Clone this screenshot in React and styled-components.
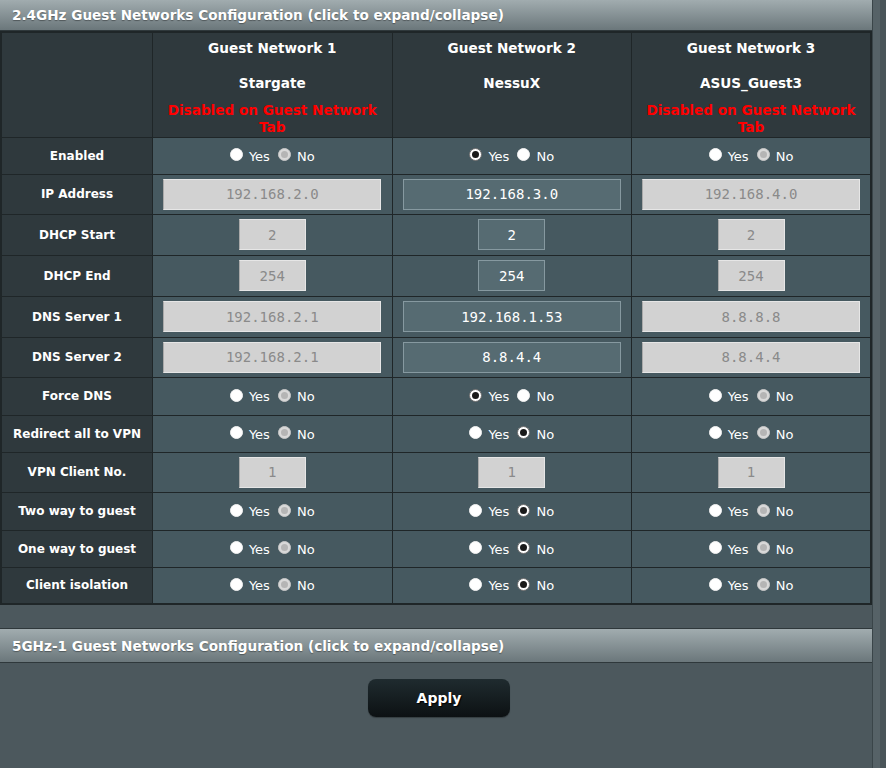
import React from "react";
import styled, { createGlobalStyle } from "styled-components";

const Global = createGlobalStyle`
  html, body { margin: 0; padding: 0; background: #4c585d; }
  body { font-family: "DejaVu Sans", Verdana, sans-serif; color: #fff; }
`;

const Page = styled.div`
  display: flex;
  width: 886px;
  height: 768px;
  overflow: hidden;
`;

const Main = styled.div`
  width: 872px;
  display: flex;
  flex-direction: column;
`;

const SideStrip = styled.div`
  width: 14px;
  border-left: 1px solid #3a4549;
  background: linear-gradient(to right, #566267 0 7px, #4a5559 7px);
`;

const SectionBar = styled.div`
  height: ${(p) => p.$h}px;
  box-sizing: border-box;
  display: flex;
  align-items: center;
  padding-left: 12px;
  background: linear-gradient(to bottom, #a1acaf, #6b777b);
  border-top: ${(p) => (p.$bordered ? "1px solid #2f383b" : "none")};
  border-bottom: 1px solid #2f383b;
  font-size: 13.6px;
  font-weight: bold;
  color: #fff;
  text-shadow: 0 1px 1px rgba(0, 0, 0, 0.35);
  white-space: nowrap;
`;

const Table = styled.table`
  width: 872px;
  table-layout: fixed;
  border-collapse: collapse;
  border: 2px solid #1f2628;
`;

const HeadRow = styled.tr`
  height: 105px;
`;

const Row = styled.tr`
  height: ${(p) => p.$h}px;
`;

const Corner = styled.th`
  width: 148px;
  background: #2f393d;
  border: 1px solid #1f2628;
`;

const HeadCell = styled.th`
  background: #2f393d;
  border: 1px solid #1f2628;
  vertical-align: top;
  padding: 7px 6px 0;
  font-size: 13.6px;
  font-weight: bold;
  line-height: 17.5px;
  color: #fff;
`;

const Ssid = styled.div`
  margin-top: 17.5px;
`;

const Warn = styled.div`
  margin-top: 9px;
  color: #ff0000;
  line-height: 17px;
`;

const Label = styled.th`
  background: #2f393d;
  border: 1px solid #1f2628;
  font-size: 12px;
  font-weight: bold;
  color: #fff;
  text-align: center;
  padding: 0 2px;
`;

const Cell = styled.td`
  background: #465960;
  border: 1px solid #1f2628;
  text-align: center;
  vertical-align: middle;
  padding: 0;
`;

const Field = styled.input`
  box-sizing: border-box;
  width: ${(p) => (p.$wide ? 218 : 67)}px;
  height: 31px;
  margin: 0;
  padding: 0 4px;
  text-align: center;
  font-family: "DejaVu Sans Mono", monospace;
  font-size: 14px;
  outline: none;
  border-radius: 0;
  ${(p) =>
    p.disabled
      ? `
    background: #d2d2d2;
    color: #8a8a8a;
    border: 1px solid #e6e6e6;
    border-left-color: #a9a9a9;
  `
      : `
    background: #566b72;
    color: #ffffff;
    border: 1px solid #8699a0;
  `}
`;

const RadioGroup = styled.div`
  display: inline-flex;
  align-items: center;
  font-size: 13px;
  color: #fff;
`;

const Option = styled.span`
  display: inline-flex;
  align-items: center;
  margin: 0 4px;
`;

const Dot = styled.span`
  position: relative;
  display: inline-block;
  box-sizing: border-box;
  width: 13px;
  height: 13px;
  border-radius: 50%;
  margin-right: 6px;
  margin-top: -3px;
  background: ${(p) => (p.$checked && p.$disabled ? "#d9d9d9" : "#ffffff")};
  border: 1px solid ${(p) => (p.$checked ? (p.$disabled ? "#c8c8c8" : "#6d6d6d") : "#f2f2f2")};
  &::after {
    content: "";
    display: ${(p) => (p.$checked ? "block" : "none")};
    position: absolute;
    left: 50%;
    top: 50%;
    width: 7px;
    height: 7px;
    margin: -3.5px 0 0 -3.5px;
    border-radius: 50%;
    background: ${(p) => (p.$disabled ? "#b5b5b5" : "#1a1a1a")};
  }
`;

const Bottom = styled.div`
  display: flex;
  flex-direction: column;
`;

const Gap = styled.div`
  height: 23px;
`;

const ButtonRow = styled.div`
  display: flex;
  justify-content: center;
  padding: 16px 0 0 6px;
`;

const ApplyButton = styled.button`
  width: 142px;
  height: 38px;
  border: none;
  border-radius: 8px;
  background: linear-gradient(to bottom, #1f2b2f, #0c1113);
  box-shadow: 0 1px 1px rgba(0, 0, 0, 0.3);
  color: #fff;
  font-family: "DejaVu Sans", Verdana, sans-serif;
  font-size: 14px;
  font-weight: bold;
  text-shadow: 1px 1px 1px #000;
  cursor: pointer;
`;

const networks = [
  { name: "Guest Network 1", ssid: "Stargate", disabled: true, ip: "192.168.2.0", start: "2", end: "254", dns1: "192.168.2.1", dns2: "192.168.2.1", enabled: "no", force: "no", vpn: "no", two: "no", one: "no", iso: "no" },
  { name: "Guest Network 2", ssid: "NessuX", disabled: false, ip: "192.168.3.0", start: "2", end: "254", dns1: "192.168.1.53", dns2: "8.8.4.4", enabled: "yes", force: "yes", vpn: "no", two: "no", one: "no", iso: "no" },
  { name: "Guest Network 3", ssid: "ASUS_Guest3", disabled: true, ip: "192.168.4.0", start: "2", end: "254", dns1: "8.8.8.8", dns2: "8.8.4.4", enabled: "no", force: "no", vpn: "no", two: "no", one: "no", iso: "no" },
];

function Radio({ value, disabled }) {
  return (
    <RadioGroup>
      <Option>
        <Dot $checked={value === "yes"} $disabled={disabled} />
        Yes
      </Option>
      <Option>
        <Dot $checked={value === "no"} $disabled={disabled} />
        No
      </Option>
    </RadioGroup>
  );
}

const rows = [
  { label: "Enabled", h: 37, render: (n) => <Radio value={n.enabled} disabled={n.disabled} /> },
  { label: "IP Address", h: 40, render: (n) => <Field $wide disabled={n.disabled} defaultValue={n.ip} /> },
  { label: "DHCP Start", h: 41, render: (n) => <Field disabled={n.disabled} defaultValue={n.start} /> },
  { label: "DHCP End", h: 41, render: (n) => <Field disabled={n.disabled} defaultValue={n.end} /> },
  { label: "DNS Server 1", h: 41, render: (n) => <Field $wide disabled={n.disabled} defaultValue={n.dns1} /> },
  { label: "DNS Server 2", h: 40, render: (n) => <Field $wide disabled={n.disabled} defaultValue={n.dns2} /> },
  { label: "Force DNS", h: 38, render: (n) => <Radio value={n.force} disabled={n.disabled} /> },
  { label: "Redirect all to VPN", h: 37, render: (n) => <Radio value={n.vpn} disabled={n.disabled} /> },
  { label: "VPN Client No.", h: 40, render: () => <Field disabled defaultValue="1" /> },
  { label: "Two way to guest", h: 38, render: (n) => <Radio value={n.two} disabled={n.disabled} /> },
  { label: "One way to guest", h: 37, render: (n) => <Radio value={n.one} disabled={n.disabled} /> },
  { label: "Client isolation", h: 37, render: (n) => <Radio value={n.iso} disabled={n.disabled} /> },
];

export default function App() {
  return (
    <Page>
      <Global />
      <Main>
        <SectionBar $h={31}>2.4GHz Guest Networks Configuration (click to expand/collapse)</SectionBar>
        <Table>
          <thead>
            <HeadRow>
              <Corner />
              {networks.map((n) => (
                <HeadCell key={n.name}>
                  <div>{n.name}</div>
                  <Ssid>{n.ssid}</Ssid>
                  {n.disabled && <Warn>Disabled on Guest Network Tab</Warn>}
                </HeadCell>
              ))}
            </HeadRow>
          </thead>
          <tbody>
            {rows.map((r) => (
              <Row key={r.label} $h={r.h}>
                <Label>{r.label}</Label>
                {networks.map((n) => (
                  <Cell key={n.name}>{r.render(n)}</Cell>
                ))}
              </Row>
            ))}
          </tbody>
        </Table>
        <Bottom>
          <Gap />
          <SectionBar $h={35} $bordered>5GHz-1 Guest Networks Configuration (click to expand/collapse)</SectionBar>
          <ButtonRow>
            <ApplyButton type="button">Apply</ApplyButton>
          </ButtonRow>
        </Bottom>
      </Main>
      <SideStrip />
    </Page>
  );
}
